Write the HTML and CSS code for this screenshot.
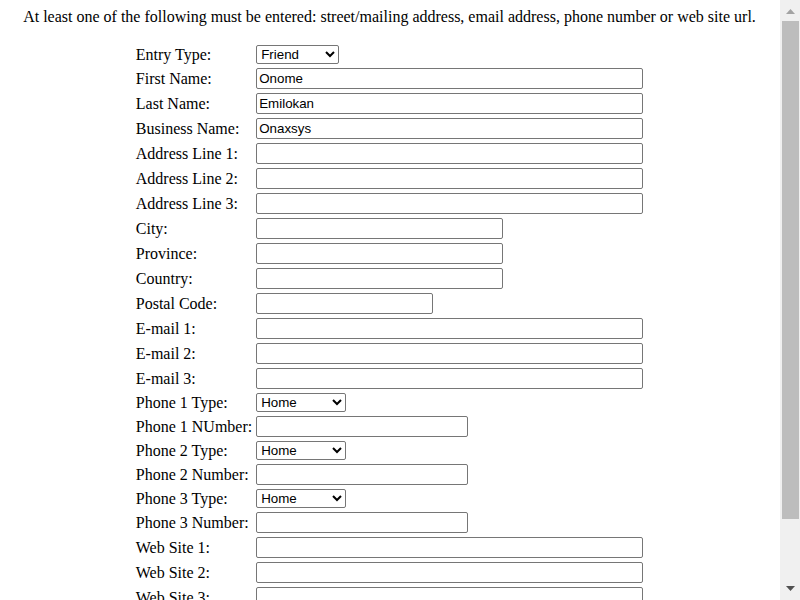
FILE: index.html
```html
<!DOCTYPE html>
<html>
<head>
<meta charset="utf-8">
<link rel="stylesheet" href="styles.css">
</head>
<body>
<div class="note">At least one of the following must be entered: street/mailing address, email address, phone number or web site url.</div>
<form class="entry-form">
<table class="form-table">
<tr><td>Entry Type:</td><td><select class="sel sel-entry"><option>Friend</option></select></td></tr>
<tr><td>First Name:</td><td><input class="txt w-full" type="text" value="Onome"></td></tr>
<tr><td>Last Name:</td><td><input class="txt w-full" type="text" value="Emilokan"></td></tr>
<tr><td>Business Name:</td><td><input class="txt w-full" type="text" value="Onaxsys"></td></tr>
<tr><td>Address Line 1:</td><td><input class="txt w-full" type="text"></td></tr>
<tr><td>Address Line 2:</td><td><input class="txt w-full" type="text"></td></tr>
<tr><td>Address Line 3:</td><td><input class="txt w-full" type="text"></td></tr>
<tr><td>City:</td><td><input class="txt w-mid" type="text"></td></tr>
<tr><td>Province:</td><td><input class="txt w-mid" type="text"></td></tr>
<tr><td>Country:</td><td><input class="txt w-mid" type="text"></td></tr>
<tr><td>Postal Code:</td><td><input class="txt w-postal" type="text"></td></tr>
<tr><td>E-mail 1:</td><td><input class="txt w-full" type="text"></td></tr>
<tr><td>E-mail 2:</td><td><input class="txt w-full" type="text"></td></tr>
<tr><td>E-mail 3:</td><td><input class="txt w-full" type="text"></td></tr>
<tr><td>Phone 1 Type:</td><td><select class="sel sel-phone"><option>Home</option></select></td></tr>
<tr><td>Phone 1 NUmber:</td><td><input class="txt w-phone" type="text"></td></tr>
<tr><td>Phone 2 Type:</td><td><select class="sel sel-phone"><option>Home</option></select></td></tr>
<tr><td>Phone 2 Number:</td><td><input class="txt w-phone" type="text"></td></tr>
<tr><td>Phone 3 Type:</td><td><select class="sel sel-phone"><option>Home</option></select></td></tr>
<tr><td>Phone 3 Number:</td><td><input class="txt w-phone" type="text"></td></tr>
<tr><td>Web Site 1:</td><td><input class="txt w-full" type="text"></td></tr>
<tr><td>Web Site 2:</td><td><input class="txt w-full" type="text"></td></tr>
<tr><td>Web Site 3:</td><td><input class="txt w-full" type="text"></td></tr>
</table>
</form>
<div class="scrollbar" aria-hidden="true">
  <div class="sb-btn sb-up"><svg width="9" height="5" viewBox="0 0 9 5"><path d="M4.5 0L9 5H0z" fill="#a3a3a3"/></svg></div>
  <div class="sb-thumb"></div>
  <div class="sb-rest"></div>
  <div class="sb-btn sb-down"><svg width="9" height="5" viewBox="0 0 9 5"><path d="M0 0H9L4.5 5z" fill="#505050"/></svg></div>
</div>
</body>
</html>
```
FILE: styles.css
```css
body {
  margin: 8px 29px 8px 8px;
  font-family: "Liberation Serif", "Times New Roman", serif;
  font-size: 16px;
  color: #000;
  background: #fff;
}
.note {
  text-align: center;
  margin-bottom: 16px;
}
.form-table {
  margin: 0 auto;
  border-spacing: 2px;
}
.form-table td {
  padding: 1px;
  vertical-align: middle;
}
.txt {
  font-family: "Liberation Sans", Arial, sans-serif;
  font-size: 13.333px;
  box-sizing: border-box;
  height: 21px;
  margin: 0;
  padding: 1px 2px;
  border: 1px solid #767676;
  border-radius: 2px;
}
.w-full { width: 387px; }
.w-mid { width: 247px; }
.w-postal { width: 177px; }
.w-phone { width: 212px; }
.sel {
  font-family: "Liberation Sans", Arial, sans-serif;
  font-size: 13.333px;
  margin: 0;
  box-sizing: border-box;
  height: 19px;
  border: 1px solid #767676;
  border-radius: 2px;
  background: #fff;
}
.sel-entry { width: 83px; }
.sel-phone { width: 90px; }

.scrollbar {
  position: fixed;
  top: 0;
  right: 0;
  width: 20px;
  height: 100%;
  background: #f0f0f0;
  display: flex;
  flex-direction: column;
}
.sb-btn {
  display: flex;
  justify-content: center;
  flex: none;
}
.sb-btn svg {
  display: block;
}
.sb-up {
  height: 21px;
  padding-top: 9px;
  box-sizing: border-box;
}
.sb-down {
  height: 20px;
  padding-top: 6px;
  box-sizing: border-box;
}
.sb-thumb {
  flex: none;
  height: 498px;
  margin: 0 1px 0 2px;
  background: #bdbdbd;
}
.sb-rest {
  flex: 1;
}
```
